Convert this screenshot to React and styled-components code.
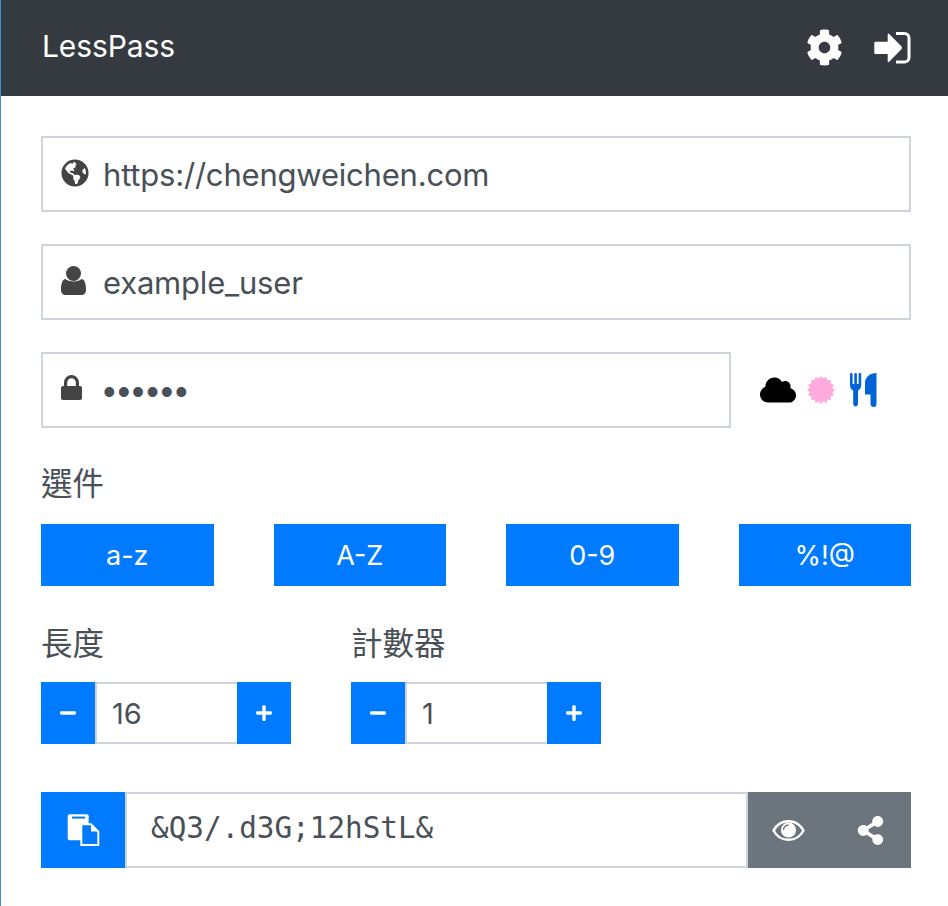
import React from 'react';
import styled, { createGlobalStyle } from 'styled-components';
import { FaGlobeAmericas, FaCog, FaCloud, FaMinus, FaPlus, FaShareAlt } from 'react-icons/fa';

const Global = createGlobalStyle`
    html, body {
        margin: 0;
        padding: 0;
        background: #fff;
    }
    * {
        box-sizing: border-box;
    }
`;

const Wrap = styled.div`
    width: 948px;
    height: 906px;
    overflow: hidden;
    border-left: 1px solid #3f8fd8;
    font-family: Inter, "Noto Sans CJK TC", sans-serif;
    color: #495057;
    background: #fff;
`;
const Header = styled.header`
    display: flex;
    align-items: center;
    justify-content: space-between;
    height: 96px;
    padding: 0 37px 0 41px;
    background-color: #343a40;
    color: #fff;
`;
const Brand = styled.div`
    font-size: 30px;
    letter-spacing: -0.1px;
    padding-bottom: 4px;
`;
const HeaderIcons = styled.div`
    display: flex;
    align-items: center;
    gap: 31px;
    font-size: 37px;
    padding-bottom: 2px;
    svg {
        display: block;
    }
`;
const Main = styled.main`
    display: flex;
    flex-direction: column;
    padding: 40px 37px 0 40px;
`;
const Field = styled.div`
    display: flex;
    align-items: center;
    width: ${({ width }) => width || '100%'};
    height: 76px;
    padding-left: 18px;
    border: 2px solid #ced4da;
    background: #fff;
    margin-bottom: ${({ mb }) => mb || 32}px;
`;
const FieldIcon = styled.div`
    display: flex;
    flex: none;
    width: 26px;
    margin-right: 16px;
    padding-bottom: ${({ lift }) => lift || 2}px;
    color: #444;
    font-size: 28px;
    svg {
        display: block;
        flex: none;
    }
`;
const FieldText = styled.div`
    font-size: 31px;
    letter-spacing: -0.2px;
`;
const Dots = styled.div`
    font-family: "Liberation Sans", sans-serif;
    font-size: 36px;
    letter-spacing: 1.8px;
    padding-top: 3px;
`;
const MasterRow = styled.div`
    display: flex;
`;
const Fingerprint = styled.div`
    display: flex;
    align-items: center;
    height: 76px;
    margin-left: 29px;
    svg {
        display: block;
    }
`;
const Glyph = styled.div`
    display: flex;
    color: ${({ color }) => color};
    font-size: ${({ size }) => size}px;
    margin-right: ${({ mr }) => mr}px;
`;
const Label = styled.div`
    font-size: 31.5px;
    line-height: 36px;
`;
const Options = styled.div`
    display: grid;
    grid-template-columns: repeat(4, 1fr);
    column-gap: 60px;
    margin: 22px 0 40px;
`;
const BlueButton = styled.div`
    display: flex;
    align-items: center;
    justify-content: center;
    height: 62px;
    background-color: #007bff;
    color: #fff;
    font-size: 27px;
`;
const Steppers = styled.div`
    display: flex;
    gap: 60px;
    margin-bottom: 48px;
`;
const Stepper = styled.div`
    display: flex;
    width: 250px;
    height: 62px;
    margin-top: 20px;
`;
const StepButton = styled(BlueButton)`
    flex: none;
    width: 54px;
    font-size: 18px;
`;
const StepValue = styled.div`
    flex: 1;
    display: flex;
    align-items: center;
    padding-left: 15px;
    border: 2px solid #ced4da;
    border-right: 0;
    font-size: 29px;
`;
const PasswordRow = styled.div`
    display: flex;
    height: 76px;
`;
const CopyButton = styled(BlueButton)`
    flex: none;
    width: 84px;
    height: 76px;
`;
const Generated = styled.div`
    flex: 1;
    display: flex;
    align-items: center;
    padding-left: 24px;
    padding-bottom: 4px;
    border: 2px solid #ced4da;
    font-family: "DejaVu Sans Mono", monospace;
    font-size: 29.3px;
`;
const GreyActions = styled.div`
    flex: none;
    display: flex;
    align-items: center;
    width: 163px;
    background-color: #6c757d;
    color: #fff;
`;
const GreyIcon = styled.div`
    flex: 1;
    display: flex;
    justify-content: center;
    font-size: ${({ size }) => size}px;
`;

const SignInIcon = () => (
    <svg width="37" height="33" viewBox="0 0 37 33">
        <path fill="#fff" d="M1.5 10.7 H13.7 V3.4 Q13.7 1.8 15.2 2.9 L27.6 15.6 Q28.6 16.8 27.6 18 L15.2 30.7 Q13.7 31.8 13.7 30.2 V23 H1.5 Q0.3 23 0.3 21.8 V11.9 Q0.3 10.7 1.5 10.7Z" />
        <path fill="none" stroke="#fff" strokeWidth="3" d="M22 2.5 H30.5 a4.5 4.5 0 0 1 4.5 4.5 V26.5 a4.5 4.5 0 0 1-4.5 4.5 H22" />
    </svg>
);

const UserIcon = () => (
    <svg width="25" height="29" viewBox="0 0 25 29" fill="currentColor">
        <circle cx="12.5" cy="7.5" r="7.5" />
        <path d="M4.5 13 C7 16.2 18 16.2 20.5 13 C23.8 13.5 25 18 25 24 C25 27 23 29 20.5 29 H4.5 C2 29 0 27 0 24 C0 18 1.2 13.5 4.5 13Z" />
    </svg>
);

const LockIcon = () => (
    <svg width="21" height="25" viewBox="0 0 21 25" fill="currentColor">
        <rect x="0" y="11" width="21" height="14" rx="2" />
        <path fill="none" stroke="currentColor" strokeWidth="3.2" d="M4.6 12 V7.5 a5.9 5.9 0 0 1 11.8 0 V12" />
    </svg>
);

// 16 point burst, the pink one of the fingerprint
const burst = Array.from({ length: 32 }, (_, i) => {
    const r = i % 2 ? 11.6 : 14;
    const a = (i * Math.PI) / 16;
    return `${(14 + r * Math.sin(a)).toFixed(2)},${(14 - r * Math.cos(a)).toFixed(2)}`;
}).join(' ');

const BurstIcon = () => (
    <svg width="28" height="28" viewBox="0 0 28 28">
        <polygon points={burst} fill="currentColor" />
    </svg>
);

const CutleryIcon = () => (
    <svg width="27" height="34" viewBox="0 0 27 34" fill="currentColor">
        <path d="M0 1.2 a1.2 1.2 0 0 1 2.6 0 V11 H4.3 V1.2 a1.2 1.2 0 0 1 2.6 0 V11 H8.6 V1.2 a1.2 1.2 0 0 1 2.6 0 V12 C11.2 15 9.8 16.5 8 17.5 V31 a2.4 2.4 0 0 1-4.8 0 V17.5 C1.4 16.5 0 15 0 12Z" />
        <path d="M26.5 0 V31 a3 3 0 0 1-6 0 V21.5 H15 V10 C15 4 20 0 26.5 0Z" />
    </svg>
);

const PasteIcon = () => (
    <svg width="33" height="33" viewBox="0 0 33 33">
        <rect x="0.7" y="0.3" width="21" height="26" rx="2" fill="#fff" />
        <rect x="5" y="2.6" width="13" height="2" fill="#007bff" />
        <path d="M14.3 10.3 H24 L31.3 17.6 V31 H14.3Z" fill="#007bff" stroke="#fff" strokeWidth="2" />
        <path d="M24 10.3 V17.6 H31.3Z" fill="#fff" />
    </svg>
);

const EyeIcon = () => (
    <svg width="33" height="21" viewBox="0 0 33 21">
        <path fill="none" stroke="#fff" strokeWidth="2.4" d="M1.5 10.5 C5 4 10.5 1.2 16.5 1.2 S28 4 31.5 10.5 C28 17 22.5 19.8 16.5 19.8 S5 17 1.5 10.5Z" />
        <circle cx="16.5" cy="10" r="7.6" fill="#fff" />
        <path fill="none" stroke="#6c757d" strokeWidth="1.3" d="M11.5 10 a5 5 0 0 1 5-5" />
    </svg>
);

const options = ['a-z', 'A-Z', '0-9', '%!@'];

const counters = [
    { title: '長度', value: 16 },
    { title: '計數器', value: 1 }
];

export default function App() {
    return <Wrap>
        <Global />
        <Header>
            <Brand>LessPass</Brand>
            <HeaderIcons>
                <FaCog />
                <SignInIcon />
            </HeaderIcons>
        </Header>
        <Main>
            <Field>
                <FieldIcon><FaGlobeAmericas /></FieldIcon>
                <FieldText>https://chengweichen.com</FieldText>
            </Field>
            <Field>
                <FieldIcon lift={4}><UserIcon /></FieldIcon>
                <FieldText>example_user</FieldText>
            </Field>
            <MasterRow>
                <Field width="690px" mb={38}>
                    <FieldIcon lift={5}><LockIcon /></FieldIcon>
                    <Dots>••••••</Dots>
                </Field>
                <Fingerprint>
                    <Glyph color="#000" size={36} mr={11}><FaCloud /></Glyph>
                    <Glyph color="#ffaadd" size={28} mr={15}><BurstIcon /></Glyph>
                    <Glyph color="#0064d8" size={32} mr={0}><CutleryIcon /></Glyph>
                </Fingerprint>
            </MasterRow>
            <Label>選件</Label>
            <Options>
                {options.map(item => <BlueButton key={item}>{item}</BlueButton>)}
            </Options>
            <Steppers>
                {counters.map(item => (
                    <div key={item.title}>
                        <Label>{item.title}</Label>
                        <Stepper>
                            <StepButton><FaMinus /></StepButton>
                            <StepValue>{item.value}</StepValue>
                            <StepButton><FaPlus /></StepButton>
                        </Stepper>
                    </div>
                ))}
            </Steppers>
            <PasswordRow>
                <CopyButton><PasteIcon /></CopyButton>
                <Generated>&amp;Q3/.d3G;12hStL&amp;</Generated>
                <GreyActions>
                    <GreyIcon size={33}><EyeIcon /></GreyIcon>
                    <GreyIcon size={29}><FaShareAlt /></GreyIcon>
                </GreyActions>
            </PasswordRow>
        </Main>
    </Wrap>;
}
